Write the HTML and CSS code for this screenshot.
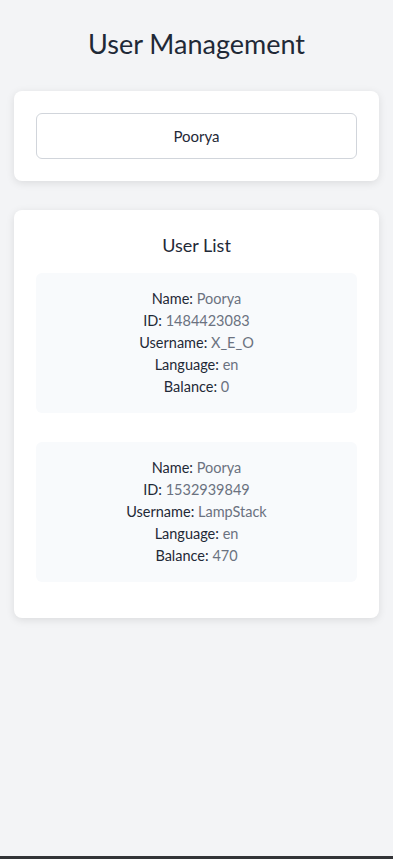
FILE: index.html
```html
<!DOCTYPE html>
<html lang="en">
<head>
    <meta charset="UTF-8">
    <meta name="viewport" content="width=device-width, initial-scale=1.0">
    <title>User Management</title>
    <link rel="stylesheet" href="styles.css">
</head>
<body>
    <div class="container">
        <h1>User Management</h1>

        <div class="card">
            <input class="search-input" type="text" value="Poorya">
        </div>

        <div class="card">
            <h2>User List</h2>
            <div class="user-list">
                <div class="user-item">
                    <div><span class="label">Name:</span> <span class="value">Poorya</span></div>
                    <div><span class="label">ID:</span> <span class="value">1484423083</span></div>
                    <div><span class="label">Username:</span> <span class="value">X_E_O</span></div>
                    <div><span class="label">Language:</span> <span class="value">en</span></div>
                    <div><span class="label">Balance:</span> <span class="value">0</span></div>
                </div>
                <div class="user-item">
                    <div><span class="label">Name:</span> <span class="value">Poorya</span></div>
                    <div><span class="label">ID:</span> <span class="value">1532939849</span></div>
                    <div><span class="label">Username:</span> <span class="value">LampStack</span></div>
                    <div><span class="label">Language:</span> <span class="value">en</span></div>
                    <div><span class="label">Balance:</span> <span class="value">470</span></div>
                </div>
            </div>
        </div>
    </div>
    <div class="bottom-bar"></div>
</body>
</html>
```

FILE: styles.css
```css
* {
    margin: 0;
    padding: 0;
    box-sizing: border-box;
    font-family: 'Lato', 'Noto Sans', sans-serif;
}

body {
    background-color: #f3f4f6;
    color: #1f2937;
    min-height: 100vh;
    display: flex;
    flex-direction: column;
}

.container {
    flex: 1;
    padding: 24px 14px;
}

h1 {
    font-size: 27px;
    font-weight: normal;
    line-height: 40px;
    text-align: center;
    margin-bottom: 27px;
}

.card {
    background-color: white;
    border-radius: 8px;
    box-shadow: 0 2px 8px rgba(0, 0, 0, 0.1);
    padding: 22px;
    margin-bottom: 29px;
}

.search-input {
    display: block;
    width: 100%;
    height: 46px;
    border: 1px solid #d1d5db;
    border-radius: 6px;
    text-align: center;
    font-size: 15px;
    color: #1f2937;
    background: white;
    outline: none;
}

h2 {
    font-size: 18px;
    font-weight: normal;
    line-height: 26px;
    text-align: center;
    margin-bottom: 15px;
}

.user-list {
    display: flex;
    flex-direction: column;
    gap: 29px;
    padding-bottom: 14px;
}

.user-item {
    background-color: #f8fafc;
    border-radius: 6px;
    padding: 15px 16px;
    text-align: center;
    font-size: 14.5px;
    line-height: 22px;
}

.value {
    color: #6b7280;
}

.bottom-bar {
    height: 3px;
    background-color: #323336;
}
```
